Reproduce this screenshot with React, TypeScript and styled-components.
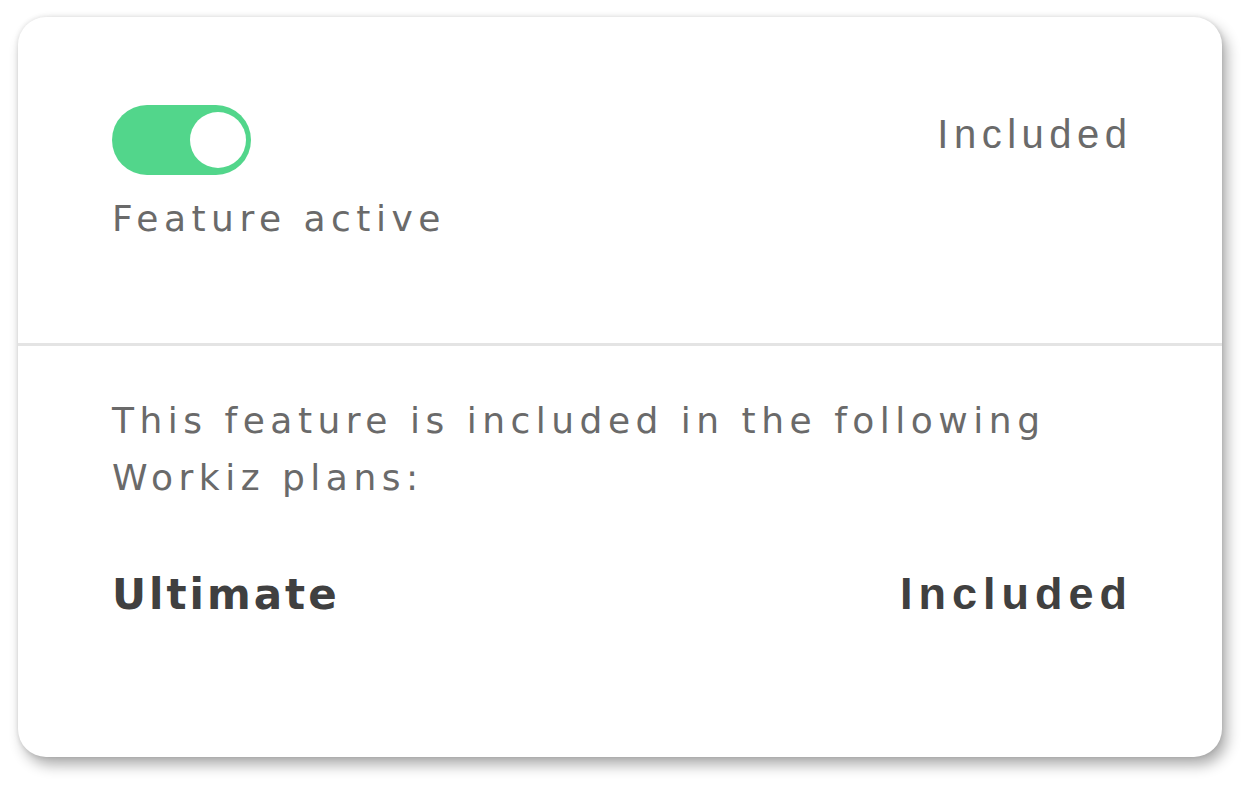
import React from "react";
import styled, { createGlobalStyle } from "styled-components";

const GlobalStyle = createGlobalStyle`
  html, body {
    margin: 0;
    padding: 0;
    background: #ffffff;
  }
`;

const Page = styled.div`
  width: 1254px;
  height: 790px;
  box-sizing: border-box;
  padding: 17px 32px 33px 18px;
`;

const Card = styled.div`
  width: 1204px;
  height: 740px;
  background: #ffffff;
  border-radius: 28px;
  box-shadow: 5px 8px 14px rgba(0, 0, 0, 0.32), 0 0 5px rgba(0, 0, 0, 0.12);
  display: flex;
  flex-direction: column;
  overflow: hidden;
`;

const TopSection = styled.div`
  height: 329px;
  box-sizing: border-box;
  padding: 88px 95px 0 94px;
  display: flex;
  justify-content: space-between;
  align-items: flex-start;
  border-bottom: 3px solid #e4e4e4;
`;

const ToggleBlock = styled.div`
  display: flex;
  flex-direction: column;
  gap: 15px;
`;

const Switch = styled.div<{ $on: boolean }>`
  position: relative;
  width: 139px;
  height: 70px;
  border-radius: 35px;
  background: ${(p) => (p.$on ? "#52d68b" : "#d0d0d0")};
`;

const Knob = styled.span<{ $on: boolean }>`
  position: absolute;
  top: 7px;
  ${(p) => (p.$on ? "right: 5px;" : "left: 5px;")}
  width: 56px;
  height: 56px;
  border-radius: 50%;
  background: #ffffff;
`;

const Text = styled.div`
  font-family: "DejaVu Sans", "Liberation Sans", sans-serif;
  font-size: 36px;
  line-height: 57px;
  color: #6a6a6a;
  letter-spacing: 5.5px;
`;

const Status = styled.div`
  font-family: "Liberation Sans", Arial, sans-serif;
  font-size: 40px;
  line-height: 46px;
  color: #6a6a6a;
  letter-spacing: 5.5px;
  margin-top: 6px;
  margin-right: -5.5px;
`;

const BottomSection = styled.div`
  padding: 46px 95px 0 94px;
  display: flex;
  flex-direction: column;
`;

const PlanRow = styled.div`
  margin-top: 62px;
  display: flex;
  justify-content: space-between;
  align-items: baseline;
`;

const PlanName = styled.div`
  font-family: "DejaVu Sans", "Liberation Sans", sans-serif;
  font-weight: 700;
  font-size: 42px;
  color: #404040;
  letter-spacing: 3px;
`;

const PlanStatus = styled.div`
  font-family: "Liberation Sans", Arial, sans-serif;
  font-weight: 700;
  font-size: 45px;
  color: #404040;
  letter-spacing: 6px;
  margin-right: -6px;
`;

const plans = [{ name: "Ultimate", status: "Included" }];

export default function App() {
  return (
    <>
      <GlobalStyle />
      <Page>
        <Card>
          <TopSection>
            <ToggleBlock>
              <Switch $on>
                <Knob $on />
              </Switch>
              <Text>Feature active</Text>
            </ToggleBlock>
            <Status>Included</Status>
          </TopSection>
          <BottomSection>
            <Text>
              This feature is included in the following
              <br />
              Workiz plans:
            </Text>
            {plans.map((plan) => (
              <PlanRow key={plan.name}>
                <PlanName>{plan.name}</PlanName>
                <PlanStatus>{plan.status}</PlanStatus>
              </PlanRow>
            ))}
          </BottomSection>
        </Card>
      </Page>
    </>
  );
}
